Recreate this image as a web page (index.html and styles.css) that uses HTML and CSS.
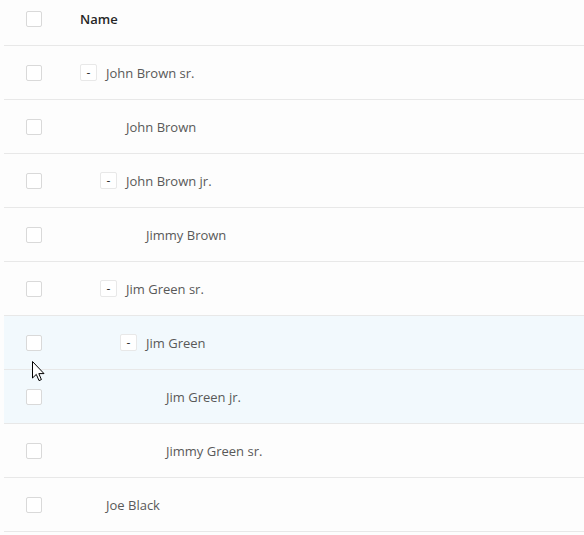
FILE: index.html
```html
<!DOCTYPE html>
<html>
<head>
<meta charset="utf-8">
<link rel="stylesheet" href="styles.css">
</head>
<body>
<div class="table">
  <div class="row head">
    <div class="cell-check"><span class="checkbox"></span></div>
    <div class="cell-name">Name</div>
  </div>
  <div class="row">
    <div class="cell-check"><span class="checkbox"></span></div>
    <div class="cell-name lvl0"><span class="expander">-</span><span>John Brown sr.</span></div>
  </div>
  <div class="row">
    <div class="cell-check"><span class="checkbox"></span></div>
    <div class="cell-name lvl1"><span class="spacer"></span><span>John Brown</span></div>
  </div>
  <div class="row">
    <div class="cell-check"><span class="checkbox"></span></div>
    <div class="cell-name lvl1"><span class="expander">-</span><span>John Brown jr.</span></div>
  </div>
  <div class="row">
    <div class="cell-check"><span class="checkbox"></span></div>
    <div class="cell-name lvl2"><span class="spacer"></span><span>Jimmy Brown</span></div>
  </div>
  <div class="row">
    <div class="cell-check"><span class="checkbox"></span></div>
    <div class="cell-name lvl1"><span class="expander">-</span><span>Jim Green sr.</span></div>
  </div>
  <div class="row hover">
    <div class="cell-check"><span class="checkbox"></span></div>
    <div class="cell-name lvl2"><span class="expander">-</span><span>Jim Green</span></div>
  </div>
  <div class="row hover">
    <div class="cell-check"><span class="checkbox"></span></div>
    <div class="cell-name lvl3"><span class="spacer"></span><span>Jim Green jr.</span></div>
  </div>
  <div class="row">
    <div class="cell-check"><span class="checkbox"></span></div>
    <div class="cell-name lvl3"><span class="spacer"></span><span>Jimmy Green sr.</span></div>
  </div>
  <div class="row">
    <div class="cell-check"><span class="checkbox"></span></div>
    <div class="cell-name lvl0"><span class="spacer"></span><span>Joe Black</span></div>
  </div>
</div>
<svg class="cursor" width="13" height="21" viewBox="0 0 13 21">
  <path d="M0.5 0.5 L0.5 17 L4.3 13.4 L7 19.6 L9.4 18.6 L6.8 12.6 L12 12.6 Z" fill="#fff" stroke="#000" stroke-width="1" stroke-linejoin="miter"/>
</svg>
</body>
</html>
```
FILE: styles.css
```css
html, body {
  margin: 0;
  padding: 0;
  background: #fdfdfd;
}
body {
  font-family: "Open Sans", "Noto Sans", sans-serif;
  font-size: 13px;
  color: #595959;
  position: relative;
}
.table {
  margin-left: 4px;
}
.row {
  display: flex;
  align-items: center;
  height: 53px;
  border-bottom: 1px solid #e8e8e8;
}
.row.head {
  height: 37px;
  padding-bottom: 8px;
  color: #262626;
  font-weight: 600;
}
.row.hover {
  background: #f2f9fd;
}
.cell-check {
  width: 76px;
  padding-left: 22px;
  box-sizing: border-box;
  display: flex;
  align-items: center;
}
.checkbox {
  display: block;
  width: 16px;
  height: 16px;
  box-sizing: border-box;
  border: 1px solid #d9d9d9;
  border-radius: 2px;
  background: #fff;
}
.cell-name {
  display: flex;
  align-items: center;
}
.lvl1 { padding-left: 20px; }
.lvl2 { padding-left: 40px; }
.lvl3 { padding-left: 60px; }
.expander {
  width: 17px;
  height: 17px;
  box-sizing: border-box;
  border: 1px solid #e8e8e8;
  border-radius: 2px;
  background: #fff;
  display: flex;
  align-items: center;
  justify-content: center;
  font-size: 12px;
  line-height: 1;
  color: #333;
  margin-right: 9px;
}
.spacer {
  width: 17px;
  height: 17px;
  margin-right: 9px;
}
.cursor {
  position: absolute;
  left: 32px;
  top: 361px;
}
```
